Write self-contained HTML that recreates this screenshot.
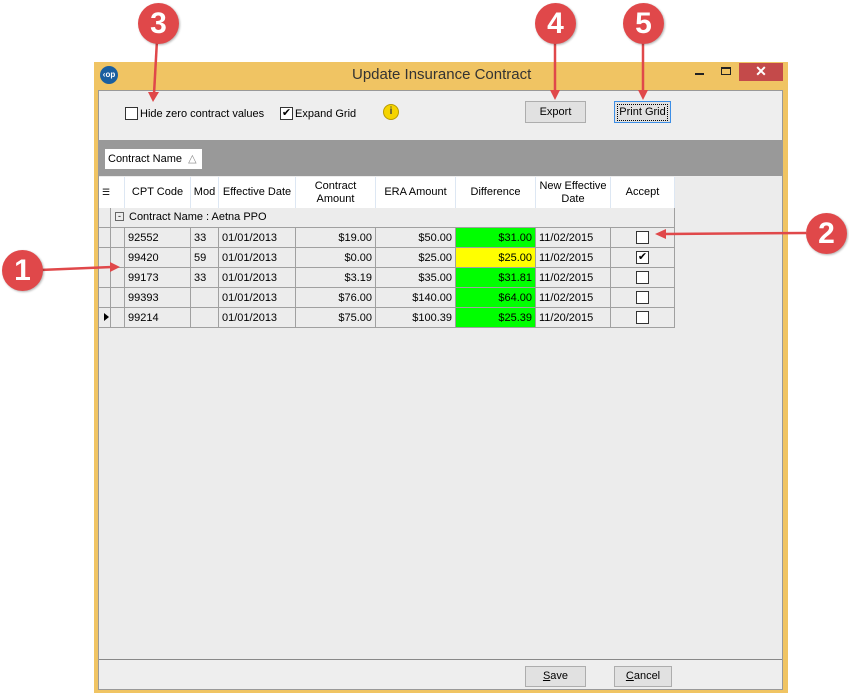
<!DOCTYPE html>
<html><head><meta charset="utf-8"><style>
*{box-sizing:border-box;margin:0;padding:0}
body{width:849px;height:693px;background:#fff;position:relative;overflow:hidden;font-family:"Liberation Sans",Arial,sans-serif;font-size:11px;color:#000}
.a{position:absolute}
.win{left:94px;top:62px;width:694px;height:631px;background:#f0c463}
.cb{display:inline-block;width:13px;height:13px;border:1px solid #333;background:#fff;position:absolute}
.btn{position:absolute;background:#e1e1e1;border:1px solid #adadad;text-align:center;font-size:11px;line-height:18px}
.cell{position:absolute;height:20px;border-right:1px solid #a0a0a0;border-bottom:1px solid #a0a0a0;line-height:20px;padding:0 3px;white-space:nowrap;background:#ececec}
.h{position:absolute;top:177px;height:31px;background:#fff;border-right:1px solid #dde7f3;text-align:center;display:flex;align-items:center;justify-content:center;line-height:13px}
.r{text-align:right}
.circ{position:absolute;width:41px;height:41px;border-radius:50%;background:#e0484a;color:#fff;font-size:30px;text-align:center;line-height:41px;font-weight:bold;box-shadow:1px 1px 2px rgba(0,0,0,.3)}
</style></head><body>
<div class="a win"></div>
<div class="a" style="left:100px;top:66px;width:18px;height:18px;border-radius:50%;background:#1a5fa0;color:#fff;font-size:8px;line-height:18px;text-align:center;font-weight:bold">‹op</div>
<div class="a" style="left:352px;top:66px;font-size:15px;color:#333">Update Insurance Contract</div>
<div class="a" style="left:695px;top:73px;width:9px;height:2px;background:#222"></div>
<div class="a" style="left:721px;top:67px;width:10px;height:8px;border:1px solid #222;border-top-width:2px"></div>
<div class="a" style="left:739px;top:63px;width:44px;height:18px;background:#c44a4a;color:#fff;text-align:center;font-size:14px;line-height:17px;font-weight:bold">✕</div>
<div class="a" style="left:98px;top:90px;width:685px;height:600px;background:#eeeeee;border:1px solid #999"></div>
<div class="cb" style="left:125px;top:107px"></div>
<div class="a" style="left:140px;top:108px">Hide zero contract values</div>
<div class="cb" style="left:280px;top:107px;font-size:11px;line-height:11px;text-align:center">✔</div>
<div class="a" style="left:295px;top:108px">Expand Grid</div>
<div class="a" style="left:383px;top:104px;width:16px;height:16px;border-radius:50%;background:#f5d400;border:1px solid #b89a00;font-size:10px;text-align:center;line-height:14px;font-weight:bold;color:#444">i</div>
<div class="btn" style="left:525px;top:101px;width:61px;height:22px;line-height:20px">Export</div>
<div class="btn" style="left:614px;top:101px;width:57px;height:22px;line-height:20px;border-color:#3c8ee6"><div style="margin:2px;border:1px dotted #000;line-height:15px">Print Grid</div></div>
<div class="a" style="left:99px;top:140px;width:683px;height:520px;background:#ececec;border-bottom:1px solid #888"></div>
<div class="a" style="left:99px;top:140px;width:683px;height:36px;background:#999"></div>
<div class="a" style="left:105px;top:149px;width:97px;height:20px;background:#fff;line-height:20px;padding-left:3px">Contract Name &nbsp;<span style="color:#888">△</span></div>
<div class="h" style="left:99px;width:26px;justify-content:flex-start;padding-left:3px;font-size:9px">☰</div>
<div class="h" style="left:125px;width:66px">CPT Code</div>
<div class="h" style="left:191px;width:28px">Mod</div>
<div class="h" style="left:219px;width:77px">Effective Date</div>
<div class="h" style="left:296px;width:80px">Contract<br>Amount</div>
<div class="h" style="left:376px;width:80px">ERA Amount</div>
<div class="h" style="left:456px;width:80px">Difference</div>
<div class="h" style="left:536px;width:75px">New Effective<br>Date</div>
<div class="h" style="left:611px;width:64px">Accept</div>
<div class="a" style="left:99px;top:208px;width:576px;height:20px;border-right:1px solid #a0a0a0;border-bottom:1px solid #a0a0a0"></div>
<div class="a" style="left:99px;top:208px;width:12px;height:120px;border-right:1px solid #a0a0a0"></div>
<div class="a" style="left:115px;top:212px;width:9px;height:9px;border:1px solid #666;font-size:9px;line-height:6px;text-align:center">-</div>
<div class="a" style="left:129px;top:211px">Contract Name : Aetna PPO</div>
<div id="rows"></div>
<div class="a" style="left:104px;top:313px;width:0;height:0;border-left:5px solid #000;border-top:4px solid transparent;border-bottom:4px solid transparent"></div>
<div class="btn" style="left:525px;top:666px;width:61px;height:21px"><u>S</u>ave</div>
<div class="btn" style="left:614px;top:666px;width:58px;height:21px"><u>C</u>ancel</div>
<svg class="a" style="left:0;top:0" width="849" height="693">
<g stroke="#e0484a" stroke-width="2.5" fill="#e0484a">
<line x1="40" y1="270" x2="112" y2="267"/><polygon points="120,267 110,262 110,272" stroke="none"/>
<line x1="806" y1="233" x2="664" y2="234"/><polygon points="655,234 666,229 666,239" stroke="none"/>
<line x1="157" y1="40" x2="154" y2="94"/><polygon points="153,102 148,92 159,92" stroke="none"/>
<line x1="555" y1="40" x2="555" y2="92"/><polygon points="555,100 550,90 560,90" stroke="none"/>
<line x1="643" y1="40" x2="643" y2="92"/><polygon points="643,100 638,90 648,90" stroke="none"/>
</g></svg>
<div class="circ" style="left:2px;top:250px">1</div>
<div class="circ" style="left:806px;top:213px">2</div>
<div class="circ" style="left:138px;top:3px">3</div>
<div class="circ" style="left:535px;top:3px">4</div>
<div class="circ" style="left:623px;top:3px">5</div>
<script>
var d=[["92552","33","$19.00","$50.00","$31.00","11/02/2015",0,0],["99420","59","$0.00","$25.00","$25.00","11/02/2015",1,1],["99173","33","$3.19","$35.00","$31.81","11/02/2015",0,0],["99393","","$76.00","$140.00","$64.00","11/02/2015",0,0],["99214","","$75.00","$100.39","$25.39","11/20/2015",0,0]];
var h="";d.forEach(function(r,i){var t=228+i*20;
h+='<div class="cell" style="left:111px;top:'+t+'px;width:14px"></div>';
h+='<div class="cell" style="left:125px;top:'+t+'px;width:66px">'+r[0]+'</div>';
h+='<div class="cell" style="left:191px;top:'+t+'px;width:28px">'+r[1]+'</div>';
h+='<div class="cell" style="left:219px;top:'+t+'px;width:77px">01/01/2013</div>';
h+='<div class="cell r" style="left:296px;top:'+t+'px;width:80px">'+r[2]+'</div>';
h+='<div class="cell r" style="left:376px;top:'+t+'px;width:80px">'+r[3]+'</div>';
h+='<div class="cell r" style="left:456px;top:'+t+'px;width:80px;background:'+(r[6]?'#ffff00':'#00ff00')+'">'+r[4]+'</div>';
h+='<div class="cell" style="left:536px;top:'+t+'px;width:75px">'+r[5]+'</div>';
h+='<div class="cell" style="left:611px;top:'+t+'px;width:64px"><div class="cb" style="left:25px;top:3px;font-size:11px;line-height:11px;text-align:center">'+(r[7]?'✔':'')+'</div></div>';
h+='<div class="cell" style="left:99px;top:'+t+'px;width:12px;background:#ececec"></div>';});
document.getElementById("rows").innerHTML=h;
</script>
</body></html>
